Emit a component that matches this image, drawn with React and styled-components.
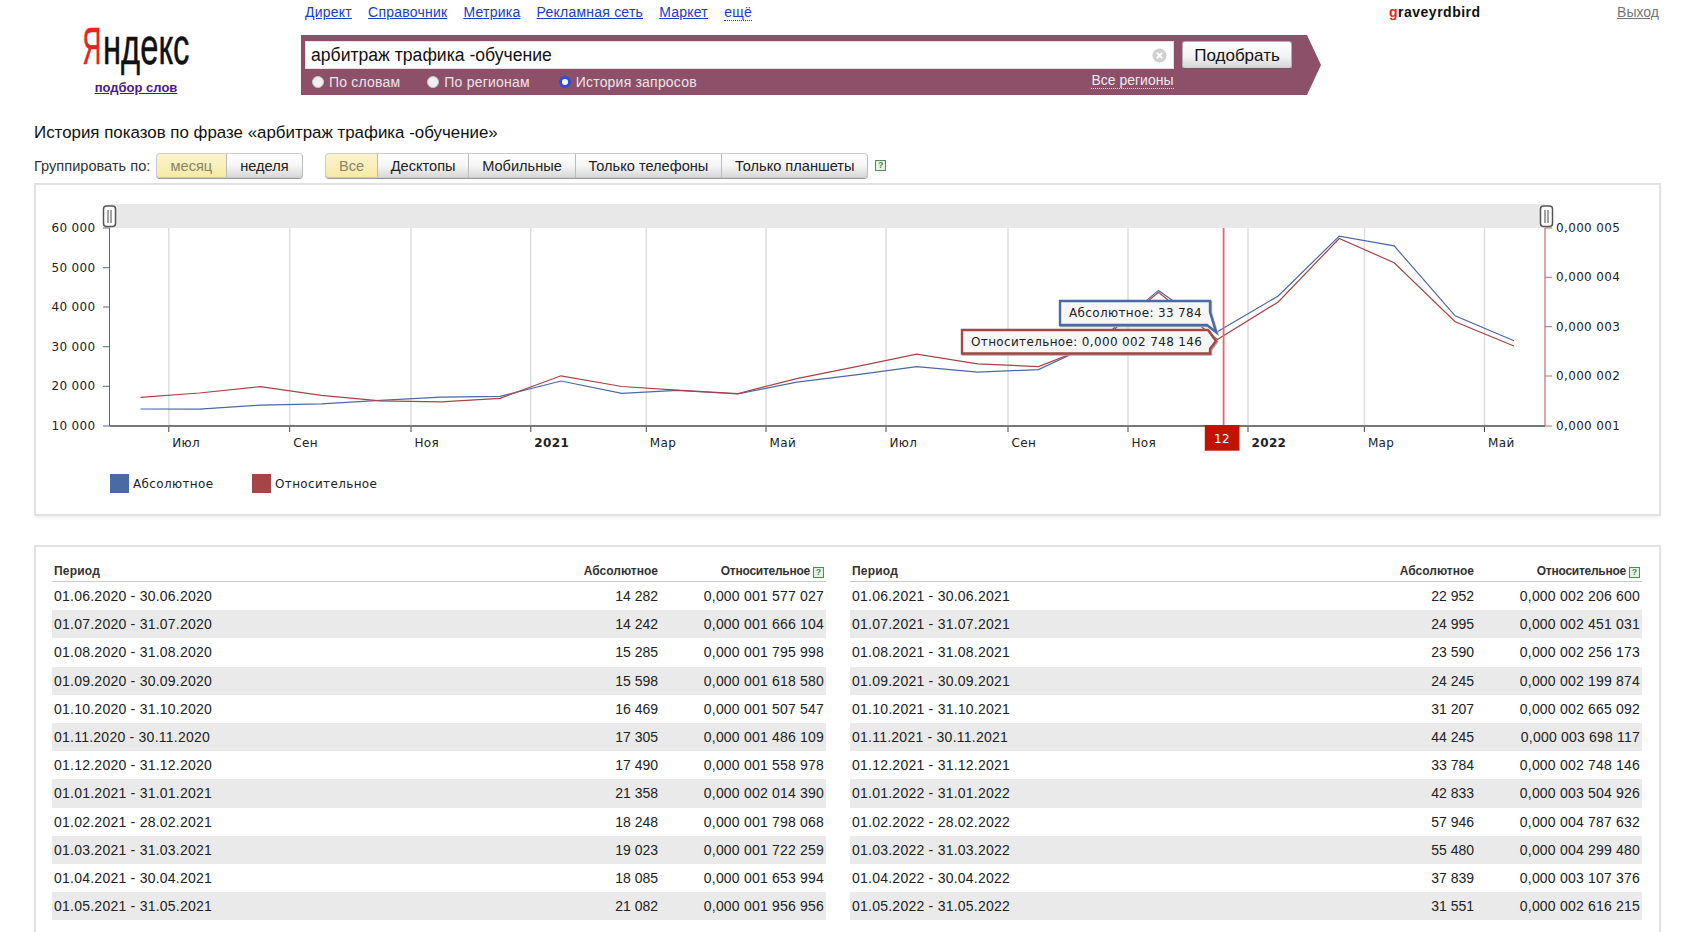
import React from 'react'
import styled, { createGlobalStyle } from "styled-components"

const GlobalStyle = createGlobalStyle`
    html, body {
        margin: 0;
        height: 100%;
        overflow: hidden;
        background: #fff;
        font-family: "Liberation Sans", Arial, sans-serif;
        color: #222;
    }
`

const rows = [
    ["01.06.2020 - 30.06.2020", "14 282", "0,000 001 577 027"],
    ["01.07.2020 - 31.07.2020", "14 242", "0,000 001 666 104"],
    ["01.08.2020 - 31.08.2020", "15 285", "0,000 001 795 998"],
    ["01.09.2020 - 30.09.2020", "15 598", "0,000 001 618 580"],
    ["01.10.2020 - 31.10.2020", "16 469", "0,000 001 507 547"],
    ["01.11.2020 - 30.11.2020", "17 305", "0,000 001 486 109"],
    ["01.12.2020 - 31.12.2020", "17 490", "0,000 001 558 978"],
    ["01.01.2021 - 31.01.2021", "21 358", "0,000 002 014 390"],
    ["01.02.2021 - 28.02.2021", "18 248", "0,000 001 798 068"],
    ["01.03.2021 - 31.03.2021", "19 023", "0,000 001 722 259"],
    ["01.04.2021 - 30.04.2021", "18 085", "0,000 001 653 994"],
    ["01.05.2021 - 31.05.2021", "21 082", "0,000 001 956 956"],
    ["01.06.2021 - 30.06.2021", "22 952", "0,000 002 206 600"],
    ["01.07.2021 - 31.07.2021", "24 995", "0,000 002 451 031"],
    ["01.08.2021 - 31.08.2021", "23 590", "0,000 002 256 173"],
    ["01.09.2021 - 30.09.2021", "24 245", "0,000 002 199 874"],
    ["01.10.2021 - 31.10.2021", "31 207", "0,000 002 665 092"],
    ["01.11.2021 - 30.11.2021", "44 245", "0,000 003 698 117"],
    ["01.12.2021 - 31.12.2021", "33 784", "0,000 002 748 146"],
    ["01.01.2022 - 31.01.2022", "42 833", "0,000 003 504 926"],
    ["01.02.2022 - 28.02.2022", "57 946", "0,000 004 787 632"],
    ["01.03.2022 - 31.03.2022", "55 480", "0,000 004 299 480"],
    ["01.04.2022 - 30.04.2022", "37 839", "0,000 003 107 376"],
    ["01.05.2022 - 31.05.2022", "31 551", "0,000 002 616 215"],
]

const topLinks = ["Директ", "Справочник", "Метрика", "Рекламная сеть", "Маркет"]
const devices = ["Все", "Десктопы", "Мобильные", "Только телефоны", "Только планшеты"]

// chart geometry, in page pixels
const AXIS_LEFT = 109.5
const AXIS_RIGHT = 1545
const AXIS_TOP = 228
const AXIS_BOTTOM = 426
const grid = [
    [168.8, "Июл"], [289.7, "Сен"], [411, "Ноя"], [530.8, "2021", true],
    [646.3, "Мар"], [766, "Май"], [886, "Июл"], [1008, "Сен"], [1128, "Ноя"],
    [1248, "2022", true], [1364.4, "Мар"], [1484.5, "Май"],
]
const absTicks = [["60 000", 228], ["50 000", 267.7], ["40 000", 307], ["30 000", 346.7], ["20 000", 386.3], ["10 000", 426]]
const relTicks = [["0,000 005", 228], ["0,000 004", 277.3], ["0,000 003", 326.7], ["0,000 002", 376], ["0,000 001", 426]]

const pointX = period => {
    const [d, m, y] = period.slice(0, 10).split(".").map(Number)
    const days = (Date.UTC(y, m - 1, d) - Date.UTC(2020, 5, 1)) / 86400000
    return 140.5 + days * 1.965
}
const absY = v => AXIS_BOTTOM - (Number(v.replace(/ /g, "")) - 10000) * 0.00396
const relY = v => AXIS_BOTTOM - (Number(v.replace(/ /g, "").replace(",", ".")) * 1e6 - 1) * 49.5
const absLine = rows.map(r => `${pointX(r[0]).toFixed(1)},${absY(r[1]).toFixed(1)}`).join(" ")
const relLine = rows.map(r => `${pointX(r[0]).toFixed(1)},${relY(r[2]).toFixed(1)}`).join(" ")

const Header = styled.header`
    display: flex;
    height: 95px;
`
const LogoCol = styled.div`
    width: 272px;
    margin-right: 29px;
    padding-top: 26px;
    display: flex;
    flex-direction: column;
    align-items: center;
`
const LogoMark = styled.svg`
    display: block;
    width: 120px;
    height: 46px;
    overflow: visible;
`
const LogoText = styled.text`
    font-family: "Liberation Sans", Arial, sans-serif;
    font-size: 52px;
    fill: ${props => props.$red ? "#e8251a" : "#111"};
    stroke: ${props => props.$red ? "#e8251a" : "#111"};
    stroke-width: 0.5px;
`
const LogoSub = styled.a`
    margin-top: 8px;
    font-size: 13px;
    font-weight: bold;
    line-height: 16px;
    color: #4b1a8a;
    text-decoration: underline;
`
const SearchCol = styled.div`
    width: 1020px;
    display: flex;
    flex-direction: column;
`
const TopLinks = styled.nav`
    height: 35px;
    padding: 4px 0 0 4px;
    box-sizing: border-box;
    display: flex;
    gap: 16.2px;
    font-size: 14px;
    line-height: 17px;
    letter-spacing: 0.22px;
`
const TopLink = styled.a`
    color: #1a3dc1;
    text-decoration: ${props => props.$more ? "none" : "underline"};
    border-bottom: ${props => props.$more ? "1px dotted #1a3dc1" : "none"};
    height: 16px;
`
const SearchBar = styled.div`
    height: 60px;
    background: #8c5169;
    clip-path: polygon(0 0, 1006px 0, 1020px 30px, 1006px 60px, 0 60px);
    padding: 6px 0 0 4px;
    box-sizing: border-box;
`
const SearchRow = styled.div`
    display: flex;
    gap: 8px;
`
const InputBox = styled.div`
    width: 869px;
    height: 28px;
    box-sizing: border-box;
    background: #fff;
    border: 1px solid #e4dde0;
    display: flex;
    align-items: center;
    justify-content: space-between;
    padding: 0 6px 0 5px;
    font-size: 17.6px;
    color: #111;
`
const ClearIcon = styled.svg`
    width: 15px;
    height: 15px;
`
const SubmitButton = styled.button`
    width: 110px;
    height: 28px;
    padding: 1px 0 0;
    font-family: inherit;
    font-size: 17px;
    color: #111;
    background: linear-gradient(#fff, #f3f3f3 55%, #d4d4d4);
    border: 1px solid #b9a9b0;
    border-bottom-color: #6d5a62;
    border-radius: 3px;
`
const OptionRow = styled.div`
    display: flex;
    align-items: center;
    height: 26px;
    font-size: 14px;
    color: #ece4e8;
`
const Radio = styled.label`
    display: flex;
    align-items: center;
    gap: 5px;
    margin-left: 7px;
    margin-right: ${props => props.$gap}px;
    letter-spacing: 0.2px;
`
const RadioDot = styled.input`
    appearance: none;
    box-sizing: border-box;
    width: 12px;
    height: 12px;
    margin: 0;
    border-radius: 50%;
    background: ${props => props.checked ? "#fff" : "#f0f0f0"};
    border: ${props => props.checked ? "3px solid #2a50d8" : "1px solid #c8c8c8"};
`
const RegionLink = styled.a`
    margin-left: auto;
    margin-right: 147.5px;
    margin-top: -3px;
    line-height: 16px;
    color: #f0e8ec;
    border-bottom: 1px dotted #f4eef0;
`
const UserCol = styled.div`
    flex: 1;
    display: flex;
    justify-content: space-between;
    padding: 4px 35px 0 68px;
    font-size: 14px;
    line-height: 17px;
`
const UserName = styled.b`
    color: #111;
    letter-spacing: 0.5px;
    &::first-letter {
        color: #e8251a;
    }
`
const Logout = styled.a`
    color: #777;
    text-decoration: underline;
`

const Main = styled.main`
    width: 1627px;
    margin-left: 34px;
`
const Heading = styled.h1`
    margin: 26px 0 0;
    font-size: 16.9px;
    font-weight: normal;
    line-height: 24px;
    color: #111;
`
const Toolbar = styled.div`
    margin-top: 8px;
    display: flex;
    align-items: center;
    height: 25px;
    font-size: 14.6px;
    color: #333;
`
const ToolbarLabel = styled.span`
    width: 122px;
`
const ButtonGroup = styled.div`
    display: flex;
    height: 25px;
    margin-right: ${props => props.$gap}px;
    box-shadow: 0 1px 0 #999;
    border-radius: 4px;
`
const Segment = styled.div`
    display: flex;
    align-items: center;
    padding: 0 ${props => props.$pad}px;
    box-sizing: border-box;
    color: ${props => props.$active ? "#8a8468" : "#222"};
    background: ${props => props.$active ? "linear-gradient(#fbf4cf, #f7eaa6)" : "linear-gradient(#fff, #f6f6f6 50%, #d8d8d8)"};
    border: 1px solid #ccc;
    border-left-width: ${props => props.$first ? "1px" : "0"};
    border-left-style: solid;
    border-right-color: #bbb;
    &:first-child {
        border-radius: 4px 0 0 4px;
    }
    &:last-child {
        border-radius: 0 4px 4px 0;
    }
`
const Help = styled.span`
    display: inline-block;
    box-sizing: border-box;
    width: 11px;
    height: 11px;
    border: 1px solid #4d8c57;
    background: #e6f2e2;
    color: #4d8c57;
    font-size: 9px;
    font-weight: bold;
    line-height: 9px;
    letter-spacing: 0;
    text-align: center;
    margin-left: ${props => props.$left || 0}px;
`
const Card = styled.section`
    box-sizing: border-box;
    background: #fff;
    border: 2px solid #e2e2e2;
    box-shadow: 0 2px 3px rgba(0, 0, 0, 0.06);
`
const ChartCard = styled(Card)`
    margin-top: 5px;
    height: 333px;
`
const TableCard = styled(Card)`
    margin-top: 29px;
    padding: 14px 16px 40px;
    display: grid;
    grid-template-columns: 774px 792px;
    gap: 24px;
`
const ChartSvg = styled.svg`
    display: block;
    width: 1623px;
    height: 272px;
`
const AxisText = styled.text`
    font-family: "DejaVu Sans", Verdana, sans-serif;
    font-size: 12px;
    letter-spacing: 0.35px;
    fill: #222;
    font-weight: ${props => props.$bold ? "bold" : "normal"};
`
const CursorText = styled(AxisText)`
    fill: #fff;
`
const Tooltip = styled.path`
    fill: #fff;
    fill-opacity: 0.9;
    stroke: ${props => props.$color};
    stroke-width: 2.4px;
    filter: drop-shadow(1px 1px 0 #aaa);
`
const Legend = styled.div`
    display: flex;
    padding: 17px 0 0 74px;
    font-family: "DejaVu Sans", Verdana, sans-serif;
    font-size: 12px;
    letter-spacing: 0.35px;
`
const LegendItem = styled.div`
    display: flex;
    align-items: center;
    gap: 4px;
    width: 142px;
`
const LegendSwatch = styled.span`
    width: 19px;
    height: 19px;
    background: ${props => props.$color};
`
const TableHead = styled.div`
    display: grid;
    grid-template-columns: 1fr auto 166px;
    height: 20px;
    border-bottom: 1px solid #ccc;
    font-size: 12px;
    font-weight: bold;
    line-height: 20px;
    color: #333;
`
const Row = styled.div`
    display: grid;
    grid-template-columns: 1fr auto 166px;
    align-items: center;
    height: 28.2px;
    font-size: 14px;
    color: #222;
    background: ${props => props.$odd ? "#eaeaea" : "transparent"};
`
const Period = styled.span`
    padding-left: 2px;
    letter-spacing: ${props => props.$head ? "0.2px" : "0.24px"};
`
const Value = styled.span`
    padding-right: 2px;
    text-align: right;
    letter-spacing: ${props => props.$spacing || 0}px;
`

function Chart() {
    return (
        <ChartSvg viewBox="36 185 1623 272">
            <rect x={AXIS_LEFT} y="204" width={AXIS_RIGHT - AXIS_LEFT} height="24" fill="#e8e8e8" />
            {grid.map(([x, label, bold]) => (
                <g key={x}>
                    <line x1={x} x2={x} y1={AXIS_TOP} y2={AXIS_BOTTOM} stroke="#dedede" strokeWidth="1.5" />
                    <line x1={x} x2={x} y1={AXIS_BOTTOM} y2="432" stroke="#444" />
                    <AxisText x={x + 3.5} y="446.5" $bold={bold}>{label}</AxisText>
                </g>
            ))}
            <line x1={AXIS_LEFT} x2={AXIS_LEFT} y1={AXIS_TOP} y2={AXIS_BOTTOM} stroke="#4a6aa5" />
            <line x1={AXIS_RIGHT} x2={AXIS_RIGHT} y1={AXIS_TOP} y2={AXIS_BOTTOM} stroke="#c26a6a" strokeWidth="1.2" />
            {absTicks.map(([label, y]) => (
                <g key={label}>
                    <line x1="103" x2={AXIS_LEFT} y1={y} y2={y} stroke="#4a6aa5" />
                    <AxisText x="95.5" y={y + 4} textAnchor="end">{label}</AxisText>
                </g>
            ))}
            {relTicks.map(([label, y]) => (
                <g key={label}>
                    <line x1={AXIS_RIGHT} x2="1552" y1={y} y2={y} stroke="#c26a6a" />
                    <AxisText x="1556" y={y + 4}>{label}</AxisText>
                </g>
            ))}
            <line x1={AXIS_LEFT} x2={AXIS_RIGHT} y1={AXIS_BOTTOM} y2={AXIS_BOTTOM} stroke="#777" strokeWidth="2" />
            <polyline points={absLine} fill="none" stroke="#4a6aa5" strokeWidth="1.2" />
            <polyline points={relLine} fill="none" stroke="#a54545" strokeWidth="1.2" />

            <line x1="1223.6" x2="1223.6" y1={AXIS_TOP} y2={AXIS_BOTTOM} stroke="#e46a6a" strokeWidth="1.8" />
            <rect x="1204.8" y="425" width="34.7" height="25.7" fill="#c41200" />
            <CursorText x="1222" y="443" textAnchor="middle">12</CursorText>

            <Tooltip $color="#4a6aa5" d="M1060,301 H1210 V312 L1216,332 L1207,325 H1060 Z" />
            <AxisText x="1069" y="317">Абсолютное: 33 784</AxisText>
            <Tooltip $color="#a54545" d="M962,330 H1208 L1216,341 L1210,349 V353.5 H962 Z" />
            <AxisText x="971" y="345.5">Относительное: 0,000 002 748 146</AxisText>

            {[103.5, 1540.5].map(x => (
                <g key={x}>
                    <rect x={x} y="206" width="12" height="20.5" rx="3" fill="#fff" stroke="#555" strokeWidth="1.5" />
                    <line x1={x + 4.5} x2={x + 4.5} y1="210" y2="223" stroke="#444" />
                    <line x1={x + 7.5} x2={x + 7.5} y1="210" y2="223" stroke="#444" />
                </g>
            ))}
        </ChartSvg>
    )
}

function StatsTable({ items }) {
    return (
        <div>
            <TableHead>
                <Period $head>Период</Period>
                <Value>Абсолютное</Value>
                <Value $spacing={-0.25}>Относительное<Help $left={3}>?</Help></Value>
            </TableHead>
            {items.map((r, i) => (
                <Row key={r[0]} $odd={i % 2 === 1}>
                    <Period>{r[0]}</Period>
                    <Value>{r[1]}</Value>
                    <Value $spacing={0.2}>{r[2]}</Value>
                </Row>
            ))}
        </div>
    )
}

export default function App() {
    return (
        <>
            <GlobalStyle />
            <Header>
                <LogoCol>
                    <LogoMark viewBox="0 0 120 46">
                        <LogoText $red transform="translate(6.5 38) scale(0.5 1)">Я</LogoText>
                        <LogoText transform="translate(27 38) scale(0.63 1)">ндекс</LogoText>
                    </LogoMark>
                    <LogoSub>подбор слов</LogoSub>
                </LogoCol>
                <SearchCol>
                    <TopLinks>
                        {topLinks.map(link => <TopLink key={link}>{link}</TopLink>)}
                        <TopLink $more>ещё</TopLink>
                    </TopLinks>
                    <SearchBar>
                        <SearchRow>
                            <InputBox>
                                арбитраж трафика -обучение
                                <ClearIcon viewBox="0 0 15 15">
                                    <circle cx="7.5" cy="7.5" r="7" fill="#cfcfcf" />
                                    <path d="M4.8 4.8l5.4 5.4M10.2 4.8l-5.4 5.4" stroke="#fff" strokeWidth="2" />
                                </ClearIcon>
                            </InputBox>
                            <SubmitButton>Подобрать</SubmitButton>
                        </SearchRow>
                        <OptionRow>
                            <Radio $gap={20}><RadioDot type="radio" readOnly checked={false} />По словам</Radio>
                            <Radio $gap={22}><RadioDot type="radio" readOnly checked={false} />По регионам</Radio>
                            <Radio $gap={0}><RadioDot type="radio" readOnly checked />История запросов</Radio>
                            <RegionLink>Все регионы</RegionLink>
                        </OptionRow>
                    </SearchBar>
                </SearchCol>
                <UserCol>
                    <UserName>graveyrdbird</UserName>
                    <Logout>Выход</Logout>
                </UserCol>
            </Header>
            <Main>
                <Heading>История показов по фразе «арбитраж трафика -обучение»</Heading>
                <Toolbar>
                    <ToolbarLabel>Группировать по:</ToolbarLabel>
                    <ButtonGroup $gap={22}>
                        <Segment $pad={13.5} $active $first>месяц</Segment>
                        <Segment $pad={13.5}>неделя</Segment>
                    </ButtonGroup>
                    <ButtonGroup $gap={7}>
                        {devices.map((d, i) => <Segment key={d} $pad={12.8} $active={i === 0} $first={i === 0}>{d}</Segment>)}
                    </ButtonGroup>
                    <Help>?</Help>
                </Toolbar>
                <ChartCard>
                    <Chart />
                    <Legend>
                        <LegendItem><LegendSwatch $color="#4a6aa5" />Абсолютное</LegendItem>
                        <LegendItem><LegendSwatch $color="#a54545" />Относительное</LegendItem>
                    </Legend>
                </ChartCard>
                <TableCard>
                    <StatsTable items={rows.slice(0, 12)} />
                    <StatsTable items={rows.slice(12)} />
                </TableCard>
            </Main>
        </>
    )
}
